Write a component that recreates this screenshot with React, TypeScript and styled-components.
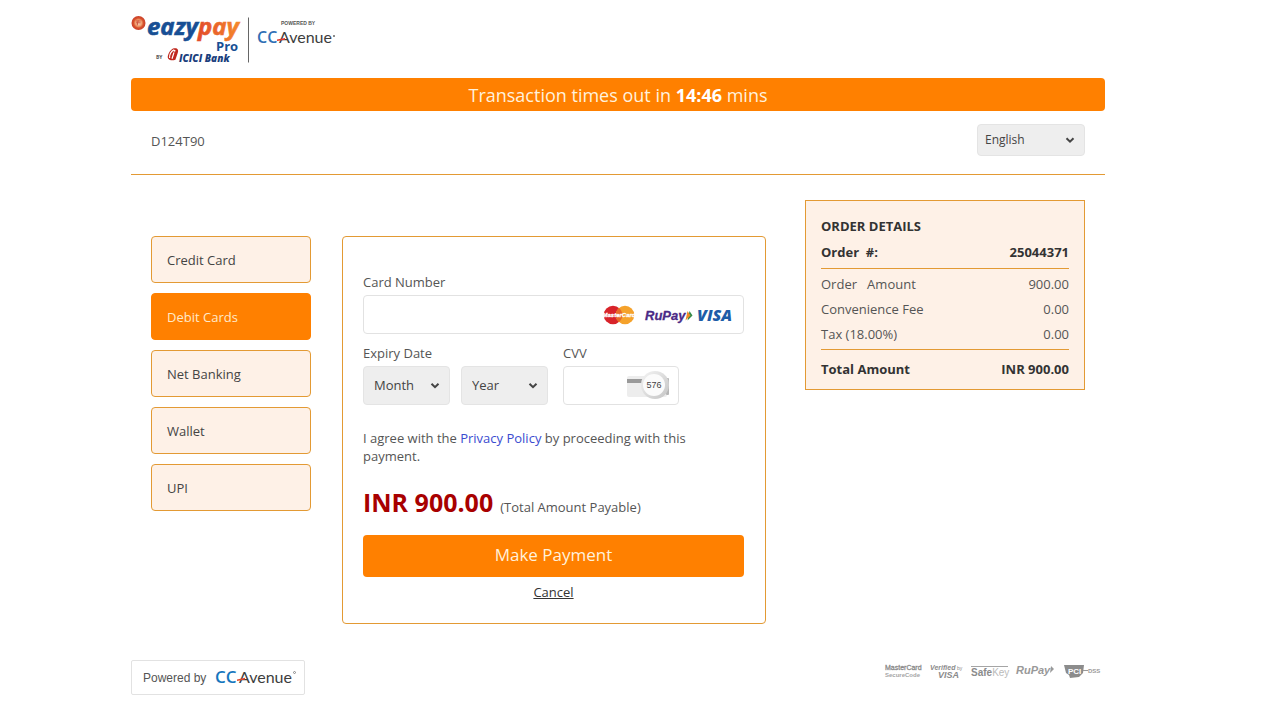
import React, { useState } from "react";
import styled, { createGlobalStyle, css } from "styled-components";

const orange = "#ff8000";
const line = "#e39a34";
const cream = "#fef1e7";

const GlobalStyle = createGlobalStyle`
  *, *::before, *::after { box-sizing: border-box; }
  body {
    margin: 0;
    background: #fff;
    color: #555;
    font-family: "Open Sans", "Noto Sans", sans-serif;
    font-size: 13px;
    line-height: 18px;
  }
  button, input, select { font: inherit; color: inherit; }
`;

const Page = styled.div`
  padding: 0 175px 24px 131px;
`;

const Header = styled.header`
  display: flex;
  padding: 10px 0 12px;
`;

const Banner = styled.div`
  background: ${orange};
  border-radius: 4px;
  padding: 5px 0 4px;
  color: #fff1dc;
  font-size: 18px;
  line-height: 24px;
  text-align: center;

  strong { color: #fff; }
`;

const SubHeader = styled.div`
  display: flex;
  justify-content: space-between;
  align-items: flex-start;
  padding: 13px 20px 18px;
  border-bottom: 1px solid ${line};
`;

const MerchantId = styled.span`
  padding-top: 8px;
`;

const SelectWrap = styled.div<{ $width: number }>`
  position: relative;
  flex: 0 0 ${(p) => p.$width}px;
  display: flex;

  svg {
    position: absolute;
    right: 9px;
    top: 0;
    height: 100%;
    pointer-events: none;
  }
`;

const Select = styled.select<{ $small?: boolean }>`
  appearance: none;
  width: 100%;
  height: ${(p) => (p.$small ? 32 : 39)}px;
  padding: ${(p) => (p.$small ? "0 24px 1px 7px" : "0 24px 1px 10px")};
  border: 1px solid #e4e4e4;
  border-radius: 4px;
  background: #eee;
  color: #444;
  font-size: ${(p) => (p.$small ? 12 : 13)}px;
`;

const Main = styled.main`
  display: flex;
  align-items: flex-start;
  padding: 25px 20px 36px;
`;

const Methods = styled.nav`
  flex: 0 0 160px;
  display: flex;
  flex-direction: column;
  gap: 10px;
  margin: 36px 31px 0 0;
`;

const Method = styled.button<{ $active: boolean }>`
  height: 47px;
  padding: 0 15px;
  border: 1px solid ${line};
  border-radius: 4px;
  background: ${cream};
  color: #444;
  text-align: left;
  cursor: pointer;
  ${(p) =>
    p.$active &&
    css`
      border-color: ${orange};
      background: ${orange};
      color: #ffe9c9;
    `}
`;

const PayForm = styled.form`
  flex: 1;
  margin-top: 36px;
  padding: 36px 21px 22px 20px;
  border: 1px solid ${line};
  border-radius: 4px;
`;

const Label = styled.label`
  display: block;
  margin-bottom: 4px;
`;

const InputBox = styled.div<{ $width?: string }>`
  display: flex;
  align-items: center;
  width: ${(p) => p.$width ?? "100%"};
  height: 39px;
  padding: 0 8px;
  border: 1px solid #e2e2e2;
  border-radius: 4px;
`;

const Input = styled.input`
  flex: 1;
  min-width: 0;
  height: 100%;
  padding: 0;
  border: 0;
  outline: 0;
  background: transparent;
`;

const Fields = styled.div`
  display: flex;
  gap: 15px;
  margin-top: 10px;
`;

const SelectPair = styled.div`
  display: flex;
  gap: 11px;
`;

const Agreement = styled.p`
  margin: 24px 0 0;
`;

const PolicyLink = styled.a`
  color: #3a4bd0;
  text-decoration: none;
`;

const Payable = styled.p`
  display: flex;
  align-items: baseline;
  gap: 7px;
  margin: 19px 0 10px;
  line-height: 36px;

  strong {
    color: #a80000;
    font-size: 25px;
  }
`;

const PayButton = styled.button`
  display: block;
  width: 100%;
  height: 42px;
  padding: 0 0 3px;
  border: 0;
  border-radius: 4px;
  background: ${orange};
  color: #fff1dc;
  font-size: 17px;
  cursor: pointer;
`;

const Cancel = styled.a`
  display: block;
  width: max-content;
  margin: 6px auto 0;
  color: #333;
`;

const Order = styled.section`
  flex: 0 0 280px;
  margin-left: 39px;
  padding: 16px 15px 11px;
  border: 1px solid ${line};
  background: ${cream};
`;

const OrderTitle = styled.h2`
  margin: 0;
  color: #333;
  font-size: 13px;
  line-height: 18px;
`;

const OrderTable = styled.table`
  width: 100%;
  border-collapse: collapse;
`;

const Row = styled.tr<{ $strong?: boolean }>`
  th, td {
    padding: 3px 0 4px;
    color: ${(p) => (p.$strong ? "#333" : "#555")};
    font-weight: ${(p) => (p.$strong ? 700 : 400)};
    text-align: left;
    white-space: pre;
  }
  td { text-align: right; }
`;

const RuledBody = styled.tbody`
  border-top: 1px solid ${line};
  border-bottom: 1px solid ${line};

  tr:first-child th, tr:first-child td { padding-top: 6px; }
  tr:last-child th, tr:last-child td { padding-bottom: 6px; }
`;

const HeadSection = styled.thead`
  th, td { padding: 8px 0 7px; }
`;

const FootSection = styled.tfoot`
  th, td { padding: 10px 0 0; }
`;

const Footer = styled.footer`
  display: flex;
  justify-content: space-between;
  align-items: flex-start;
`;

const Powered = styled.div`
  display: flex;
  align-items: center;
  gap: 9px;
  height: 35px;
  padding: 0 7px 0 11px;
  border: 1px solid #e2e2e2;
  border-radius: 2px;
  font: 12px "Liberation Sans", sans-serif;
`;

const Badges = styled.div`
  padding: 2px 3px 0 0;
`;

const Chevron = () => (
  <svg width="12" viewBox="0 0 12 12" fill="none" stroke="#444" strokeWidth="2" aria-hidden="true">
    <path d="M2.5 4.2 6 7.7 9.5 4.2" />
  </svg>
);

const EazypayLogo = () => (
  <svg width="210" height="56" viewBox="0 0 210 56" role="img" aria-label="eazypay Pro by ICICI Bank, powered by CCAvenue">
    <defs>
      <linearGradient id="pay" x1="0" y1="0" x2="1" y2="0">
        <stop offset="0" stopColor="#e24a2a" />
        <stop offset="1" stopColor="#f58a2c" />
      </linearGradient>
      <radialGradient id="coin">
        <stop offset="0" stopColor="#fbe0cc" />
        <stop offset=".45" stopColor="#f0a070" />
        <stop offset=".7" stopColor="#d9512c" />
        <stop offset="1" stopColor="#c8402a" />
      </radialGradient>
    </defs>
    <circle cx="7.500" cy="13" r="7" fill="url(#coin)" />
    <path d="M5 11h4.600M5 12.800h4.600M7.200 10.400l-1 5" stroke="#c8402a" strokeWidth=".8" fill="none" />
    <g fontFamily="Open Sans, sans-serif" fontWeight="700">
      <g fontSize="24" fontStyle="italic" strokeWidth=".6">
        <text x="16" y="25" fill="#174f94" stroke="#174f94">eazy</text>
        <text x="67" y="25" fill="url(#pay)" stroke="url(#pay)">pay</text>
      </g>
      <text x="85" y="41" fontSize="13" fill="#174f94">Pro</text>
      <text x="25" y="49" fontSize="5" fill="#555">BY</text>
    </g>
    <path d="M42 38.500c4-1.200 6 .8 4.800 4.200l-2.400 7c-4.400 1.400-8.800.2-7.400-4.400.8-2.800 2.600-5.500 5-6.800z" fill="#c0281e" />
    <path d="M38.600 48c-.2-3.600 1.400-6.600 4.400-8.300M43 42.400l-2 6.400" stroke="#fff" strokeWidth="1.200" fill="none" />
    <circle cx="43.500" cy="40.700" r="1" fill="#fff" />
    <text x="48" y="52" fontFamily="Open Sans, sans-serif" fontSize="10" fontWeight="800" fontStyle="italic" fill="#1b3f7d">ICICI Bank</text>
    <path d="M117.500 7.500v45" stroke="#666" strokeWidth="1" />
    <text x="150" y="15" fontFamily="Liberation Sans, sans-serif" fontSize="5" fontWeight="700" fill="#555">POWERED BY</text>
    <text x="126" y="33" fontFamily="Open Sans, sans-serif" fontSize="16" fontWeight="600" fill="#2f6fb5">CC</text>
    <text x="148" y="33" fontFamily="Lato, sans-serif" fontSize="16" fill="#3d3d3d">Avenue</text>
    <path d="M146 29.500l8-1.600v1.800l-8 1.400z" fill="#e2372c" />
    <circle cx="203" cy="26" r="1" fill="#666" />
  </svg>
);

const CardBrands = () => (
  <svg width="133" height="24" viewBox="0 0 133 24" role="img" aria-label="MasterCard, RuPay, Visa">
    <circle cx="11" cy="12" r="9.300" fill="#d8232a" />
    <circle cx="23" cy="12" r="9.300" fill="#f5a22b" />
    <path d="M17 4.900a9.300 9.300 0 0 1 0 14.200 9.300 9.300 0 0 1 0-14.200z" fill="#e76a28" />
    <text x="17" y="14.300" textAnchor="middle" fontFamily="Liberation Sans, sans-serif" fontSize="6" fontWeight="700" fontStyle="italic" fill="#fff" stroke="#fff" strokeWidth=".3">MasterCard</text>
    <text x="43" y="17" fontFamily="Liberation Sans, sans-serif" fontSize="13" fontWeight="700" fontStyle="italic" fill="#4a2a86" stroke="#4a2a86" strokeWidth=".3">RuPay</text>
    <path d="M87.500 8l3 4.500-5 5z" fill="#2f8b4b" />
    <path d="M85.500 8l3 4.500-5 5z" fill="#f08a24" />
    <text x="95" y="18" fontFamily="Open Sans, sans-serif" fontSize="16" fontWeight="800" fontStyle="italic" fill="#1d5ca8">VISA</text>
  </svg>
);

const CvvHint = () => (
  <svg width="44" height="32" viewBox="0 0 44 32" role="img" aria-label="Three digits on the back of the card">
    <defs>
      <linearGradient id="lens" x1="0" y1="0" x2="1" y2="1">
        <stop offset="0" stopColor="#f4f4f4" />
        <stop offset="1" stopColor="#c4c4c4" />
      </linearGradient>
    </defs>
    <rect x="1" y="6" width="40" height="21" rx="2" fill="#ededed" />
    <rect x="1" y="9" width="40" height="4" fill="#9a9a9a" />
    <rect x="40" y="8" width="3" height="17" rx="1" fill="#b5b5b5" />
    <circle cx="29" cy="15" r="14" fill="url(#lens)" />
    <circle cx="28" cy="15" r="11" fill="#fbfbfb" />
    <text x="28" y="18" textAnchor="middle" fontFamily="Liberation Sans, sans-serif" fontSize="9" fill="#444">576</text>
  </svg>
);

const CCAvenueLogo = () => (
  <svg width="82" height="26" viewBox="0 0 82 26" role="img" aria-label="CCAvenue">
    <text x="0" y="18" fontFamily="Open Sans, sans-serif" fontSize="17" fontWeight="600" fill="#1676bd">CC</text>
    <text x="24" y="18" fontFamily="Lato, sans-serif" fontSize="16" fill="#3d3d3d">Avenue</text>
    <path d="M22 14.500l8-1.700v1.800l-8 1.500z" fill="#e2472c" />
    <circle cx="79.500" cy="7.500" r="1" fill="none" stroke="#555" strokeWidth=".6" />
  </svg>
);

const SecurityBadges = () => (
  <svg width="218" height="20" viewBox="0 0 218 20" role="img" aria-label="MasterCard SecureCode, Verified by Visa, SafeKey, RuPay, PCI DSS">
    <g fontFamily="Liberation Sans, sans-serif" fill="#8b8b8b">
      <text x="1" y="8" fontSize="7" stroke="#8b8b8b" strokeWidth=".3">MasterCard</text>
      <text x="1" y="15" fontSize="6" fontWeight="700" fill="#a5a5a5">SecureCode</text>
      <text x="46" y="8" fontSize="7" fontStyle="italic" fontWeight="700">Verified</text>
      <text x="73" y="8" fontSize="5">by</text>
      <text x="54" y="16" fontSize="9" fontWeight="700" fontStyle="italic">VISA</text>
      <path d="M87 4.500h37" stroke="#a5a5a5" strokeWidth="1" />
      <text x="87" y="14" fontSize="10" fontWeight="700">Safe<tspan fill="#bbb" fontWeight="400">Key</tspan></text>
      <text x="132" y="12" fontSize="11" fontWeight="700" fontStyle="italic" fill="#999">RuPay</text>
      <path d="M167 4l3 3-4 4z" fill="#999" />
    </g>
    <path d="M180 3h20l-1 8-4 4-9 1-1-3-3-2z" fill="#8c8c8c" />
    <text x="184" y="12" fontFamily="Liberation Sans, sans-serif" fontSize="8" fontWeight="700" fill="#fff">PCI</text>
    <path d="M199 8.500h5" stroke="#999" strokeWidth="1" />
    <text x="204" y="11" fontFamily="Liberation Sans, sans-serif" fontSize="6" fontWeight="700" fill="#999">DSS</text>
  </svg>
);

const methods = ["Credit Card", "Debit Cards", "Net Banking", "Wallet", "UPI"];

const months = Array.from({ length: 12 }, (_, i) => String(i + 1).padStart(2, "0"));
const years = Array.from({ length: 12 }, (_, i) => String(2024 + i));

const charges = [
  ["Order   Amount", "900.00"],
  ["Convenience Fee", "0.00"],
  ["Tax (18.00%)", "0.00"],
];

export default function App() {
  const [active, setActive] = useState("Debit Cards");

  return (
    <>
      <GlobalStyle />
      <Page>
        <Header>
          <EazypayLogo />
        </Header>
        <Banner>
          Transaction times out in <strong>14:46</strong> mins
        </Banner>
        <SubHeader>
          <MerchantId>D124T90</MerchantId>
          <SelectWrap $width={108}>
            <Select $small aria-label="Language">
              <option>English</option>
              <option>Hindi</option>
            </Select>
            <Chevron />
          </SelectWrap>
        </SubHeader>

        <Main>
          <Methods aria-label="Payment methods">
            {methods.map((name) => (
              <Method key={name} type="button" $active={name === active} onClick={() => setActive(name)}>
                {name}
              </Method>
            ))}
          </Methods>

          <PayForm onSubmit={(e) => e.preventDefault()}>
            <Label htmlFor="card">Card Number</Label>
            <InputBox>
              <Input id="card" inputMode="numeric" autoComplete="cc-number" />
              <CardBrands />
            </InputBox>

            <Fields>
              <div>
                <Label htmlFor="month">Expiry Date</Label>
                <SelectPair>
                  <SelectWrap $width={87}>
                    <Select id="month">
                      <option>Month</option>
                      {months.map((m) => <option key={m}>{m}</option>)}
                    </Select>
                    <Chevron />
                  </SelectWrap>
                  <SelectWrap $width={87}>
                    <Select aria-label="Expiry year">
                      <option>Year</option>
                      {years.map((y) => <option key={y}>{y}</option>)}
                    </Select>
                    <Chevron />
                  </SelectWrap>
                </SelectPair>
              </div>
              <div>
                <Label htmlFor="cvv">CVV</Label>
                <InputBox $width="116px">
                  <Input id="cvv" type="password" maxLength={4} autoComplete="cc-csc" />
                  <CvvHint />
                </InputBox>
              </div>
            </Fields>

            <Agreement>
              I agree with the <PolicyLink href="#privacy">Privacy Policy</PolicyLink> by proceeding with this payment.
            </Agreement>
            <Payable>
              <strong>INR 900.00</strong>
              <span>(Total Amount Payable)</span>
            </Payable>
            <PayButton type="submit">Make Payment</PayButton>
            <Cancel href="#cancel">Cancel</Cancel>
          </PayForm>

          <Order>
            <OrderTitle>ORDER DETAILS</OrderTitle>
            <OrderTable>
              <HeadSection>
                <Row $strong>
                  <th scope="row">{"Order  #:"}</th>
                  <td>25044371</td>
                </Row>
              </HeadSection>
              <RuledBody>
                {charges.map(([name, amount]) => (
                  <Row key={name}>
                    <th scope="row">{name}</th>
                    <td>{amount}</td>
                  </Row>
                ))}
              </RuledBody>
              <FootSection>
                <Row $strong>
                  <th scope="row">Total Amount</th>
                  <td>INR 900.00</td>
                </Row>
              </FootSection>
            </OrderTable>
          </Order>
        </Main>

        <Footer>
          <Powered>
            Powered by
            <CCAvenueLogo />
          </Powered>
          <Badges>
            <SecurityBadges />
          </Badges>
        </Footer>
      </Page>
    </>
  );
}
